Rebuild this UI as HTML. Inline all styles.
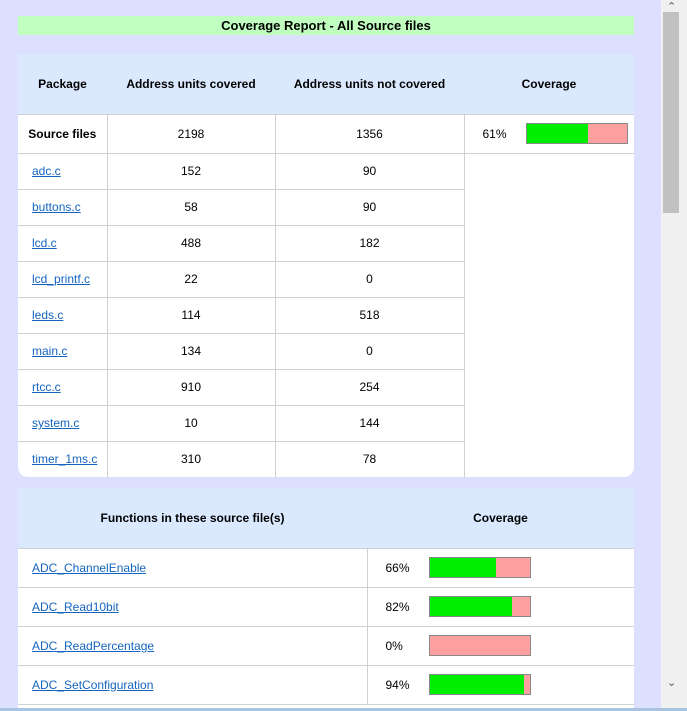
<!DOCTYPE html><html style="overflow:hidden;height:711px"><head><style>
body{margin:0;width:687px;height:711px;overflow:hidden;background:#dcdffd;font-family:"Liberation Sans",sans-serif;font-size:12px;color:#000;position:relative}
.t{position:absolute;left:18px;top:16px;width:616px;height:19px;background:#c0ffc0;text-align:center;font-weight:bold;font-size:13px;line-height:19px}
table{position:absolute;left:18px;width:616px;border-collapse:collapse;background:#fff;table-layout:fixed}
td,th{border:1px solid #d0d0d0;padding:0;text-align:center;vertical-align:middle}
th{background:#dbe9ff;border:none;font-size:12px}
a{color:#1565c0;text-decoration:underline}
td.l{text-align:left;padding-left:14px}
.bar{display:inline-block;width:100px;height:19px;border:1px solid #888;background:#ffa0a0;vertical-align:middle;position:relative}
.bar i{position:absolute;left:0;top:0;bottom:0;background:#00ee00}
.p{display:inline-block;vertical-align:middle}
.sb{position:absolute;right:0;top:0;width:26px;height:708px;background:#f0f0f0}
.th{position:absolute;left:2px;top:12px;width:16px;height:201px;background:#c1c1c1}
</style></head><body>
<div class="t">Coverage Report - All Source files</div>
<div style="position:absolute;left:18px;top:54px;width:616px;height:423px;background:#fff;border-radius:0 0 10px 10px"></div>
<table style="top:54px;background:transparent">
<colgroup><col style="width:89px"><col style="width:168px"><col style="width:189px"><col style="width:170px"></colgroup>
<tr style="height:60px"><th>Package</th><th>Address units covered</th><th>Address units not covered</th><th>Coverage</th></tr>
<tr style="height:39px;background:#fff"><td style="font-weight:bold;border-left:none">Source files</td><td>2198</td><td>1356</td><td style="text-align:left;padding-left:18px;border-right:none"><span class="p">61%</span><span class="bar" style="margin-left:19px"><i style="width:61px"></i></span></td></tr>
<tr style="height:36px"><td class="l" style="border-left:none"><a>adc.c</a></td><td>152</td><td>90</td><td rowspan="9" style="border:none;border-top:1px solid #d0d0d0;border-left:1px solid #d0d0d0"></td></tr>
<tr style="height:36px"><td class="l" style="border-left:none"><a>buttons.c</a></td><td>58</td><td>90</td></tr>
<tr style="height:36px"><td class="l" style="border-left:none"><a>lcd.c</a></td><td>488</td><td>182</td></tr>
<tr style="height:36px"><td class="l" style="border-left:none"><a>lcd_printf.c</a></td><td>22</td><td>0</td></tr>
<tr style="height:36px"><td class="l" style="border-left:none"><a>leds.c</a></td><td>114</td><td>518</td></tr>
<tr style="height:36px"><td class="l" style="border-left:none"><a>main.c</a></td><td>134</td><td>0</td></tr>
<tr style="height:36px"><td class="l" style="border-left:none"><a>rtcc.c</a></td><td>910</td><td>254</td></tr>
<tr style="height:36px"><td class="l" style="border-left:none"><a>system.c</a></td><td>10</td><td>144</td></tr>
<tr style="height:36px"><td class="l" style="border-left:none;border-bottom:none"><a>timer_1ms.c</a></td><td style="border-bottom:none">310</td><td style="border-bottom:none">78</td></tr>
</table>
<table style="top:488px">
<colgroup><col style="width:349px"><col style="width:267px"></colgroup>
<tr style="height:60px"><th>Functions in these source file(s)</th><th>Coverage</th></tr>
<tr style="height:39px"><td class="l" style="border-left:none"><a>ADC_ChannelEnable</a></td><td style="text-align:left;padding-left:18px;border-right:none"><span class="p">66%</span><span class="bar" style="margin-left:19px"><i style="width:66px"></i></span></td></tr>
<tr style="height:39px"><td class="l" style="border-left:none"><a>ADC_Read10bit</a></td><td style="text-align:left;padding-left:18px;border-right:none"><span class="p">82%</span><span class="bar" style="margin-left:19px"><i style="width:82px"></i></span></td></tr>
<tr style="height:39px"><td class="l" style="border-left:none"><a>ADC_ReadPercentage</a></td><td style="text-align:left;padding-left:18px;border-right:none"><span class="p">0%</span><span class="bar" style="margin-left:26px"><i style="width:0"></i></span></td></tr>
<tr style="height:39px"><td class="l" style="border-left:none"><a>ADC_SetConfiguration</a></td><td style="text-align:left;padding-left:18px;border-right:none"><span class="p">94%</span><span class="bar" style="margin-left:19px"><i style="width:94px"></i></span></td></tr>
</table>
<div style="position:absolute;left:18px;top:704px;width:616px;height:4px;background:#fff;border-top:1px solid #d0d0d0"></div>
<div class="sb"><div class="th"></div>
<div style="position:absolute;left:6px;top:0;font-size:11px;color:#555">&#8963;</div>
<div style="position:absolute;left:6px;top:676px;font-size:11px;color:#555">&#8964;</div></div>
<div style="position:absolute;left:0;top:708px;width:687px;height:3px;background:#a9c4e0"></div>
</body></html>
